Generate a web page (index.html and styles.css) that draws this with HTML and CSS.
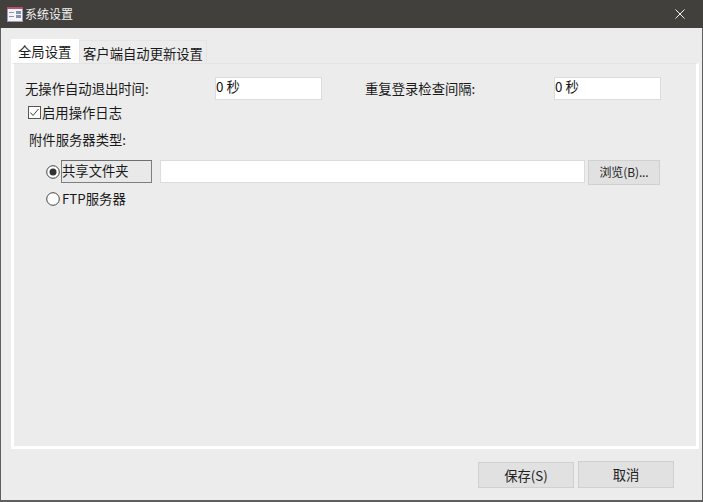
FILE: index.html
```html
<!DOCTYPE html>
<html lang="zh-CN">
<head>
<meta charset="utf-8">
<title>系统设置</title>
<link rel="stylesheet" href="styles.css">
</head>
<body>
<div class="window">
  <header class="titlebar">
    <svg class="app-icon" width="16" height="15" viewBox="0 0 16 15">
      <rect x="0.500" y="0.500" width="15" height="14" fill="#f6f4f8" stroke="#a797b2"/>
      <rect x="0" y="0" width="16" height="2" fill="#b8506c"/>
      <rect x="2" y="5" width="5" height="1" fill="#8296b4"/>
      <rect x="2" y="9" width="5" height="1" fill="#8296b4"/>
      <rect x="9" y="4" width="5" height="3" fill="#7f93b0"/>
      <rect x="9" y="8" width="5" height="3" fill="#7f93b0"/>
    </svg>
    <span class="title">系统设置</span>
    <svg class="close" width="10" height="10" viewBox="0 0 10 10">
      <path d="M0.500 0.500L9.500 9.500M9.500 0.500L0.500 9.500" stroke="#f2f2f2" stroke-width="1" fill="none"/>
    </svg>
  </header>
  <main class="content">
    <div class="tabs">
      <div class="tab tab-active">全局设置</div>
      <div class="tab">客户端自动更新设置</div>
    </div>
    <section class="pane">
      <div class="row-times">
        <span class="label label-a">无操作自动退出时间:</span>
        <div class="field field-a">0 秒</div>
        <span class="label label-b">重复登录检查间隔:</span>
        <div class="field field-b">0 秒</div>
      </div>
      <label class="check-row">
        <svg class="check" width="13" height="13" viewBox="0 0 13 13">
          <rect x="0.500" y="0.500" width="12" height="12" fill="#fff" stroke="#555"/>
          <path d="M2.500 6.500L5 9.500L10.500 3" stroke="#444" stroke-width="1" fill="none"/>
        </svg>
        <span>启用操作日志</span>
      </label>
      <div class="group-label">附件服务器类型:</div>
      <div class="radio-row radio-first">
        <svg class="radio" width="14" height="14" viewBox="0 0 14 14">
          <circle cx="7" cy="7" r="6.300" fill="#fff" stroke="#444"/>
          <circle cx="7" cy="7" r="3.500" fill="#333"/>
        </svg>
        <div class="share-box">共享文件夹</div>
        <div class="path-input"></div>
        <div class="btn btn-browse">浏览(B)...</div>
      </div>
      <div class="radio-row radio-second">
        <svg class="radio" width="14" height="14" viewBox="0 0 14 14">
          <circle cx="7" cy="7" r="6.300" fill="#fff" stroke="#444"/>
        </svg>
        <span class="ftp">FTP服务器</span>
      </div>
    </section>
  </main>
  <footer class="footer">
    <div class="btn btn-save">保存(S)</div>
    <div class="btn btn-cancel">取消</div>
  </footer>
</div>
</body>
</html>
```
FILE: styles.css
```css
* { box-sizing: border-box; }
html, body { margin: 0; padding: 0; }
body {
  width: 703px;
  height: 502px;
  overflow: hidden;
  font-family: "Noto Sans CJK SC", "Noto Sans", sans-serif;
  font-size: 13.33px;
  color: #1a1a1a;
  background: #ececec;
}
.window {
  width: 703px;
  height: 502px;
  display: flex;
  flex-direction: column;
  background: #ececec;
  border-left: 1px solid #5f5f5f;
  border-right: 1px solid #5f5f5f;
  border-bottom: 2px solid #5f5f5f;
}
.titlebar {
  height: 28px;
  margin: 0 -1px;
  flex: none;
  background: #42403d;
  display: flex;
  align-items: center;
  padding: 0 18px 0 7px;
  color: #f2f2f2;
  font-size: 12px;
}
.app-icon { flex: none; margin-right: 2px; }
.title { flex: 1; line-height: 28px; }
.close { flex: none; }
.content {
  flex: 1;
  padding: 11px 3px 0 10px;
  display: flex;
  flex-direction: column;
}
.tabs {
  display: flex;
  height: 24px;
  flex: none;
}
.tab {
  height: 24px;
  line-height: 25px;
  white-space: nowrap;
}
.tab-active {
  width: 68px;
  background: #fff;
  padding-left: 7px;
}
.tab:not(.tab-active) {
  width: 128px;
  margin-top: 1px;
  height: 23px;
  padding-left: 3px;
  border: 1px solid #e4e4e4;
  border-bottom: none;
  line-height: 25px;
}
.pane {
  height: 386px;
  flex: none;
  background: #ececec;
  border: 3px solid #fff;
  border-top: 1px solid #e4e4e4;
  border-left-width: 3px;
  padding: 13px 0 0 11px;
}
.row-times {
  display: flex;
  align-items: center;
  height: 23px;
}
.label { white-space: nowrap; }
.label-a { width: 190px; }
.field {
  height: 23px;
  background: #fff;
  border: 1px solid #dcdcdc;
  line-height: 17px;
  padding-left: 0;
  color: #111;
}
.field-a { width: 107px; margin-right: 43px; }
.label-b { width: 189px; }
.field-b { width: 107px; }
.check-row {
  display: flex;
  align-items: center;
  height: 20px;
  margin: 2px 0 0 3px;
}
.check { flex: none; margin-right: 1px; }
.group-label {
  height: 20px;
  line-height: 20px;
  margin: 8px 0 0 4px;
}
.radio-row {
  display: flex;
  align-items: center;
  margin-left: 21px;
}
.radio-first { height: 25px; margin-top: 10px; }
.radio-second { height: 20px; margin-top: 4px; }
.radio { flex: none; margin-right: 1px; }
.radio-second .radio { margin-right: 2px; }
.share-box {
  width: 91px;
  height: 23px;
  margin-bottom: 2px;
  background: #e9e9e9;
  border: 1px solid #7f7f7f;
  border-top-color: #6e6e6e;
  line-height: 19px;
  white-space: nowrap;
}
.radio-first .radio { margin-bottom: 2px; }
.path-input {
  width: 425px;
  height: 23px;
  margin-left: 8px;
  margin-bottom: 2px;
  background: #fff;
  border: 1px solid #dcdcdc;
}
.btn {
  background: #e1e1e1;
  border: 1px solid #d0d0d0;
  text-align: center;
  color: #222;
}
.btn-browse {
  width: 72px;
  height: 25px;
  margin-left: 3px;
  font-size: 12px;
  line-height: 21px;
  letter-spacing: -0.1px;
}
.ftp { line-height: 20px; }
.footer {
  flex: 1;
  display: flex;
  align-items: flex-end;
  justify-content: flex-end;
  padding: 0 28px 12px 0;
  gap: 4px;
}
.btn-save { width: 96px; height: 26px; line-height: 25px; }
.btn-cancel { width: 96px; height: 27px; line-height: 26px; }
```
